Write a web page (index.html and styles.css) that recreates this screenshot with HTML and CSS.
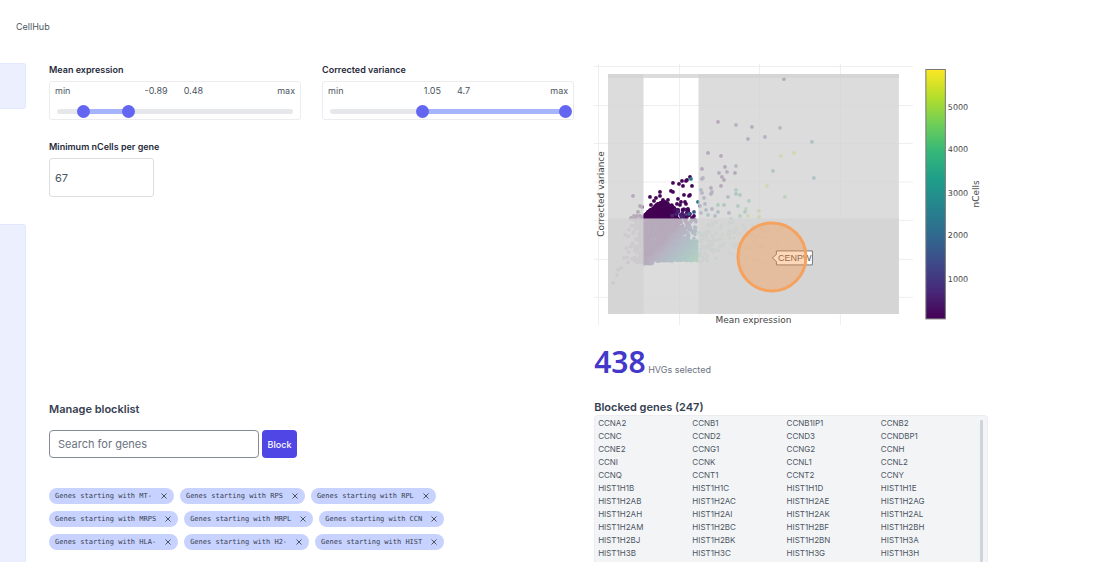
FILE: index.html
```html
<!DOCTYPE html>
<html lang="en">
<head>
<meta charset="utf-8">
<title>CellHub</title>
<link rel="stylesheet" href="styles.css">
</head>
<body>
<header class="topbar"><a class="brand" href="#">CellHub</a></header>
<div class="page">
  <aside class="side">
    <div class="side-card"></div>
    <div class="side-card side-tall"></div>
  </aside>
  <main class="content">
    <section class="controls">
      <div class="filters">
        <fieldset class="field">
          <legend class="label">Mean expression</legend>
          <div class="slider-box">
            <div class="slider-text"><span>min</span><span class="vals"><output>-0.89</output><output>0.48</output></span><span>max</span></div>
            <div class="slider">
              <div class="track"><div class="fill" style="left:10.9%;width:19.5%"></div></div>
              <input class="range" type="range" aria-label="Mean expression minimum" min="0" max="100" step="0.1" value="10.9">
              <input class="range" type="range" aria-label="Mean expression maximum" min="0" max="100" step="0.1" value="30.4">
            </div>
          </div>
        </fieldset>
        <fieldset class="field">
          <legend class="label">Corrected variance</legend>
          <div class="slider-box">
            <div class="slider-text"><span>min</span><span class="vals"><output>1.05</output><output>4.7</output></span><span>max</span></div>
            <div class="slider">
              <div class="track"><div class="fill" style="left:39.2%;width:60.8%"></div></div>
              <input class="range" type="range" aria-label="Corrected variance minimum" min="0" max="100" step="0.1" value="39.2">
              <input class="range" type="range" aria-label="Corrected variance maximum" min="0" max="100" step="0.1" value="100">
            </div>
          </div>
        </fieldset>
      </div>
      <div class="cells">
        <label class="label" for="ncells">Minimum nCells per gene</label>
        <input class="num" id="ncells" type="text" inputmode="numeric" value="67">
      </div>
      <div class="blocklist">
        <h2 class="heading"><label for="genes">Manage blocklist</label></h2>
        <form class="search">
          <input class="search-input" id="genes" type="text" placeholder="Search for genes">
          <button class="block-btn" type="button">Block</button>
        </form>
        <ul class="chips" id="chips"></ul>
      </div>
    </section>
    <section class="results">
      <svg class="chart" viewBox="594 62 394 266" role="img" aria-label="Corrected variance against mean expression">
        <defs>
          <linearGradient id="viridis" x1="0" y1="1" x2="0" y2="0">
            <stop offset="0" stop-color="#440154"/><stop offset=".11" stop-color="#482878"/>
            <stop offset=".22" stop-color="#3e4989"/><stop offset=".33" stop-color="#31688e"/>
            <stop offset=".44" stop-color="#26828e"/><stop offset=".56" stop-color="#1f9e89"/>
            <stop offset=".67" stop-color="#35b779"/><stop offset=".78" stop-color="#6ece58"/>
            <stop offset=".89" stop-color="#b5de2b"/><stop offset="1" stop-color="#fde725"/>
          </linearGradient>
        </defs>
        <path class="grid" d="M598.500 64V325M679.500 64V325M759.500 64V325M840.500 64V325M594 66.500H913M594 105.500H913M594 143.500H913M594 182H913M594 220.500H913M594 259.500H913M594 297.500H913"/>
        <g id="points"></g>
        <g class="mask">
          <rect x="608" y="74" width="35.500" height="240"/>
          <rect x="698.500" y="74" width="200.500" height="240"/>
          <rect x="608" y="74" width="291" height="4"/>
          <rect x="608" y="218.500" width="291" height="95.500"/>
        </g>
        <rect class="bar" x="926" y="69.500" width="19.500" height="249.500" fill="url(#viridis)"/>
        <g class="tick">
          <text x="948" y="110">5000</text><text x="948" y="152">4000</text><text x="948" y="196">3000</text><text x="948" y="238">2000</text><text x="948" y="282">1000</text>
        </g>
        <text class="axis" x="753.500" y="323" text-anchor="middle">Mean expression</text>
        <text class="axis" transform="translate(604 194) rotate(-90)" text-anchor="middle">Corrected variance</text>
        <text class="axis" transform="translate(979 194) rotate(-90)" text-anchor="middle">nCells</text>
        <path class="tip" d="M772.500 258L776.500 254.500V251H812.500V265H776.500V261.500Z"/>
        <text class="tip-text" x="778" y="261">CENPW</text>
        <circle class="spot" cx="772" cy="257" r="34"/>
      </svg>
      <p class="summary"><strong class="count">438</strong> <span class="count-label">HVGs selected</span></p>
      <h2 class="heading">Blocked genes (247)</h2>
      <div class="genes-box">
        <ul class="genes" id="gene-list"></ul>
        <div class="scroll"></div>
      </div>
    </section>
  </main>
</div>
<script src="app.js"></script>
</body>
</html>
```
FILE: styles.css
```css
* { box-sizing: border-box; }
html { background: #fff; }
body { margin: 0; font-family: Inter, "Liberation Sans", sans-serif; font-size: 9px; line-height: 12px; color: #4b5563; min-height: 100vh; display: flex; flex-direction: column; }
ul { list-style: none; margin: 0; padding: 0; }
.topbar { padding: 20px 16px 30px; flex: none; }
.brand { display: block; color: #4b5563; text-decoration: none; line-height: 13px; }
.page { display: flex; flex: 1; gap: 23px; padding-right: 132px; }
.side { width: 26px; flex: none; display: flex; flex-direction: column; gap: 115px; }
.side-card { height: 46px; background: #ecf0fe; border: 1px solid #e2e8fd; border-left: 0; border-radius: 0 3px 3px 0; }
.side-tall { flex: 1; border-bottom: 0; border-bottom-right-radius: 0; }
.content { flex: 1; display: grid; grid-template-columns: minmax(0, 4fr) minmax(0, 3fr); gap: 20px; }
.label { display: block; padding: 0; font-weight: 600; color: #272b3b; line-height: 14px; }
.filters { display: grid; grid-template-columns: 1fr 1fr; gap: 21px; }
.field { border: 0; margin: 0; padding: 0; min-width: 0; }
.slider-box { margin-top: 4px; border: 1px solid #ececef; border-radius: 3px; padding: 3px 5px 1px; }
.slider-text { display: flex; justify-content: space-between; }
.vals { display: flex; gap: 16px; }
.slider { position: relative; height: 20px; margin-top: 1px; padding: 11px 2px 0; }
.track { position: relative; height: 5px; border-radius: 3px; background: #e5e7eb; }
.fill { position: absolute; top: 0; height: 5px; background: #a5b4fc; }
.range { position: absolute; left: -4px; top: 7px; width: calc(100% + 8px); height: 13px; margin: 0; appearance: none; background: none; pointer-events: none; }
.range::-webkit-slider-thumb { appearance: none; width: 13px; height: 13px; border: 0; border-radius: 50%; background: #6366f1; pointer-events: auto; }
.cells { margin-top: 20px; }
.num { display: block; margin-top: 4px; width: 105px; height: 39px; padding: 0 5px; border: 1px solid #dcdee2; border-radius: 3px; font: 11px Inter, sans-serif; color: #4b5563; }
.blocklist { margin-top: 204px; }
.heading { margin: 0; font-size: 11px; line-height: 16px; font-weight: 600; color: #374151; }
.search { display: flex; gap: 3px; margin-top: 13px; }
.search-input { width: 210px; height: 28px; border: 1px solid #858b95; border-radius: 4px; padding: 0 8px; font: 11px Inter, sans-serif; color: #4b5563; }
.search-input::placeholder { color: #6b7280; }
.block-btn { width: 35px; height: 28px; padding: 0; border: 0; border-radius: 4px; background: #4f46e5; color: #fff; font: 500 9px Inter, sans-serif; }
.chips { display: flex; flex-wrap: wrap; gap: 7px 6px; margin-top: 30px; max-width: 400px; }
.chip { display: flex; align-items: center; justify-content: space-between; gap: 8px; height: 16px; padding: 0 6px; border-radius: 8px; background: #c7d2fe; font: 7px "DejaVu Sans Mono", monospace; color: #374151; }
.chip-x { display: flex; width: 8px; height: 8px; padding: 0; border: 0; background: none; }
.chip-x svg { width: 8px; height: 8px; stroke: #4b5563; fill: none; }
.chart { display: block; width: 100%; margin-top: -1px; }
.grid { stroke: #eee; fill: none; }
.mask { fill: #d3d3d3; fill-opacity: .8; }
.bar { stroke: #777; }
.tick, .axis { font-family: "DejaVu Sans", sans-serif; font-size: 8px; fill: #444; }
.axis { font-size: 9px; }
.tip { fill: #fff; stroke: #777; }
.tip-text { font: 9px "Liberation Sans", sans-serif; fill: #555; }
.spot { fill: #fb923c; fill-opacity: .36; stroke: #f6a25f; stroke-width: 3; }
.results { display: flex; flex-direction: column; }
.summary { margin: 16px 0 11px; line-height: 36px; }
.count { font: 600 30px/36px "Noto Sans", sans-serif; color: #4338ca; }
.count-label { color: #6b7280; }
.genes-box { flex: 1; display: flex; gap: 5px; padding: 1px 4px 0 3px; background: #f3f4f6; border: 1px solid #ebedf0; border-bottom: 0; border-radius: 4px 4px 0 0; }
.genes { flex: 1; display: grid; grid-template-columns: repeat(4, 1fr); grid-auto-rows: 13px; font-size: 8px; line-height: 13px; }
.scroll { width: 3px; margin-top: 3px; background: #cfd4da; border-radius: 1px; }
```
FILE: app.js
```js
const chips = ["MT-", "RPS", "RPL", "MRPS", "MRPL", "CCN", "HLA-", "H2-", "HIST"];
document.getElementById("chips").innerHTML = chips.map(c =>
  `<li class="chip">Genes starting with ${c}<button class="chip-x" type="button" aria-label="Remove ${c}"><svg viewBox="0 0 8 8"><path d="M1.500 1.500L6.500 6.500M6.500 1.500L1.500 6.500"/></svg></button></li>`).join("");

const genes = `CCNA2 CCNB1 CCNB1IP1 CCNB2 CCNC CCND2 CCND3 CCNDBP1 CCNE2 CCNG1 CCNG2 CCNH
CCNI CCNK CCNL1 CCNL2 CCNQ CCNT1 CCNT2 CCNY HIST1H1B HIST1H1C HIST1H1D HIST1H1E
HIST1H2AB HIST1H2AC HIST1H2AE HIST1H2AG HIST1H2AH HIST1H2AI HIST1H2AK HIST1H2AL
HIST1H2AM HIST1H2BC HIST1H2BF HIST1H2BH HIST1H2BJ HIST1H2BK HIST1H2BN HIST1H3A
HIST1H3B HIST1H3C HIST1H3G HIST1H3H`.split(/\s+/);
document.getElementById("gene-list").innerHTML = genes.map(g => `<li>${g}</li>`).join("");

let seed = 7;
const rnd = () => (seed = (seed * 16807) % 2147483647) / 2147483647;
const scale = [[68,1,84],[72,40,120],[62,73,137],[49,104,142],[38,130,142],[31,158,137],[53,183,121],[110,206,88],[181,222,43],[253,231,37]];
const color = t => {
  const p = Math.max(0, Math.min(.999, t)) * 9, i = Math.floor(p), f = p - i;
  return `rgb(${scale[i].map((v, k) => Math.round(v + (scale[i + 1][k] - v) * f))})`;
};
const out = [];
const dot = (x, y, t) => out.push(`<circle cx="${x.toFixed(1)}" cy="${y.toFixed(1)}" r="1.9" fill="${color(t)}"/>`);
const level = (x, y) => Math.min(.68, Math.max(0, (x - 664) / 75 + (y - 240) / 80)) + rnd() * .04;

// Low-expression fringe
for (let i = 0; i < 95; i++) { const x = 643 - 20 * rnd() * rnd(); dot(x, 217 + rnd() * 46, 0); }
[[613,283],[617,275],[621,268],[618,270],[624,258],[625,235],[633,196],[634,216],[640,206],[638,212],[642,207],[637,216],[640,216]].forEach(p => dot(p[0], p[1], 0));
// Main body below the variance cut
for (let i = 0; i < 1500; i++) {
  const x = 643 + 54 * rnd(), y = 219 + (x < 652 ? 45 : 42) * rnd();
  if (x > 680 && y < 240 && rnd() < .8) continue;
  dot(x, y, level(x, y));
}
// Selected genes, peaking near x = 664
for (let i = 0; i < 420; i++) {
  const x = 645 + 32 * rnd(), top = 201 + Math.pow(Math.abs(x - 664) / 19, 1.4) * 14;
  dot(x, top + (219 - top) * rnd(), 0);
}
for (let i = 0; i < 24; i++) { const x = 672 + 18 * rnd(); dot(x, 209 + 9 * rnd(), rnd() * .12); }
[[650,197],[656,198],[660,192],[660,196],[663,200],[668,200],[671,191],[673,192],[673,183],[679,184],[682,181],[686,181],[683,186],[690,177],[692,186],[687,180],[684,195],[689,196],[690,195],[678,199],[681,202],[686,204],[688,209],[685,202],[677,204],[651,205],[654,201],[694,216],[692,218],[680,205],[683,210]].forEach(p => dot(p[0], p[1], .01));
[[691,179,.4],[694,212,.25],[689,214,.3],[698,202,.4]].forEach(p => dot(...p));
// High-expression genes
for (let i = 0; i < 130; i++) { const d = rnd() * rnd(); dot(699 + 110 * d, 222 + 40 * rnd(), .6 + d * .5); }
[[784,79,0],[718,122,0],[736,125,.1],[752,127,.05],[780,128,.2],[765,137,.1],[748,139,.05],[708,153,0],[721,156,0],[725,167,0],[702,169,0],[736,166,.25],[719,173,.05],[727,172,.1],[735,173,0],[722,177,0],[702,179,.1],[724,180,0],[703,178,.2],[711,188,0],[721,186,0],[712,192,.15],[701,190,.3],[702,193,.2],[704,198,.2],[711,194,.1],[728,197,.3],[736,190,.6],[736,194,.5],[740,195,.55],[712,209,.2],[706,210,.3],[700,206,.2],[718,212,.3],[724,205,.5],[729,213,.2],[738,206,.6],[749,201,.65],[746,209,.8],[745,212,.6],[740,216,.7],[759,211,.85],[759,217,.9],[785,197,.75],[767,186,.93],[773,171,.5],[814,178,.45],[812,142,.4],[794,153,.93],[781,156,.95],[718,205,.6],[708,215,.5],[715,216,.3],[748,216,.9],[705,204,.25],[701,213,.3],[731,219,.7]].forEach(p => dot(...p));
document.getElementById("points").innerHTML = out.join("");
```
